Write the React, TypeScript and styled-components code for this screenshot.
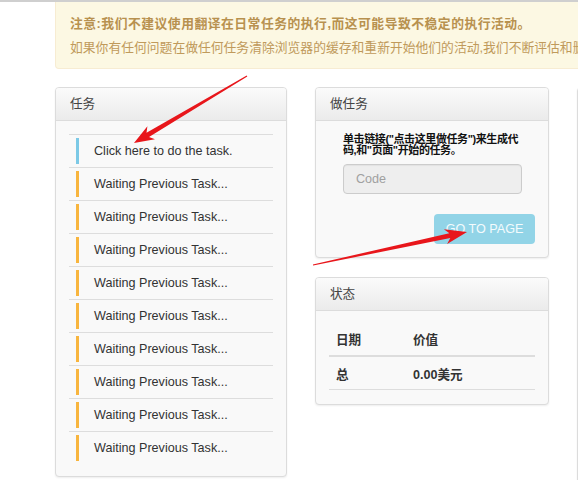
import React from "react";
import styled, { createGlobalStyle } from "styled-components";

const GlobalStyle = createGlobalStyle`
  html, body {
    margin: 0;
    padding: 0;
    background: #ffffff;
    overflow: hidden;
    font-family: "Liberation Sans", "Noto Sans CJK SC", sans-serif;
    color: #333;
  }
`;

const Viewport = styled.div`
  position: relative;
  width: 578px;
  height: 480px;
  overflow: hidden;
`;

const TopLine = styled.div`
  height: 2px;
  background: #cfcfcf;
  width: 100%;
`;

const Page = styled.div`
  width: 1000px;
  padding-left: 55px;
  box-sizing: border-box;
`;

const Alert = styled.div`
  background: #fcf8e3;
  border: 1px solid #f7ecd2;
  border-top: none;
  border-radius: 0 0 4px 4px;
  padding: 10px 14px 8px;
  color: #c09a5b;
  font-size: 12.8px;
  line-height: 24px;
  white-space: nowrap;
`;

const AlertTitle = styled.div`
  font-weight: bold;
  color: #b8914f;
  letter-spacing: 0.5px;
`;

const Columns = styled.div`
  display: grid;
  grid-template-columns: 232px 234px 232px;
  column-gap: 28px;
  align-items: start;
  margin-top: 18px;
`;

const Stack = styled.div`
  display: flex;
  flex-direction: column;
  gap: 19px;
`;

const Panel = styled.div<{ $minHeight?: number }>`
  background: #f9f9f9;
  border: 1px solid #dcdcdc;
  border-radius: 4px;
  box-shadow: 0 1px 2px rgba(0, 0, 0, 0.07);
  box-sizing: border-box;
  min-height: ${(p) => (p.$minHeight ? `${p.$minHeight}px` : "auto")};
  overflow: hidden;
`;

const PanelHeader = styled.div`
  height: 32px;
  line-height: 32px;
  padding-left: 14px;
  background: linear-gradient(#fbfbfb, #ebebeb);
  border-bottom: 1px solid #dcdcdc;
  font-size: 12.6px;
  color: #444;
`;

const PanelBody = styled.div<{ $pad: string }>`
  padding: ${(p) => p.$pad};
`;

const TaskList = styled.div`
  display: flex;
  flex-direction: column;
`;

const TaskRow = styled.div`
  display: flex;
  align-items: center;
  height: 32px;
  border-top: 1px solid #dddddd;
  padding-left: 7px;
  font-size: 12.6px;
  color: #333;
`;

const Bar = styled.span<{ $color: string }>`
  width: 3px;
  height: 26px;
  background: ${(p) => p.$color};
  margin-right: 15px;
  flex: none;
`;

const Instruction = styled.div`
  padding-left: 14px;
  font-size: 11px;
  line-height: 11px;
  font-weight: bold;
  letter-spacing: -0.4px;
  color: #111;
  white-space: nowrap;
`;

const CodeInput = styled.input`
  display: block;
  margin: 8px 0 0 14px;
  width: 179px;
  height: 30px;
  box-sizing: border-box;
  background: #eeeeee;
  border: 1px solid #cccccc;
  border-radius: 4px;
  padding: 0 12px;
  font-family: "Liberation Sans", sans-serif;
  font-size: 12.6px;
  color: #555;
  box-shadow: inset 0 1px 1px rgba(0, 0, 0, 0.05);
  &::placeholder {
    color: #a0a0a0;
  }
`;

const ButtonRow = styled.div`
  display: flex;
  justify-content: flex-end;
  margin-top: 20px;
`;

const GoButton = styled.button`
  width: 101px;
  height: 30px;
  border: none;
  border-radius: 4px;
  background: #92d4e7;
  color: #f4fbfd;
  font-family: "Liberation Sans", sans-serif;
  font-size: 12.6px;
  padding: 0;
`;

const Table = styled.table`
  width: 100%;
  table-layout: fixed;
  border-collapse: collapse;
  font-size: 12.6px;
  font-weight: bold;
  color: #333;
`;

const HeadCell = styled.th<{ $w?: number }>`
  text-align: left;
  height: 34px;
  padding: 0 7px;
  box-sizing: border-box;
  border-bottom: 2px solid #dddddd;
  width: ${(p) => (p.$w ? `${p.$w}px` : "auto")};
`;

const Cell = styled.td`
  height: 32px;
  padding: 0 7px;
  border-bottom: 1px solid #dddddd;
`;

const ArrowLayer = styled.svg`
  position: absolute;
  left: 0;
  top: 0;
  pointer-events: none;
`;

function arrowPoints(
  x1: number,
  y1: number,
  x2: number,
  y2: number,
  headLen: number,
  headW: number,
  sw: number,
  ew: number
) {
  const dx = x2 - x1;
  const dy = y2 - y1;
  const len = Math.hypot(dx, dy);
  const ux = dx / len;
  const uy = dy / len;
  const nx = -uy;
  const ny = ux;
  const bx = x2 - ux * headLen;
  const by = y2 - uy * headLen;
  const bx2 = x2 - ux * headLen * 0.8;
  const by2 = y2 - uy * headLen * 0.8;
  const pts = [
    [x1 + (nx * sw) / 2, y1 + (ny * sw) / 2],
    [bx2 + (nx * ew) / 2, by2 + (ny * ew) / 2],
    [bx + (nx * headW) / 2, by + (ny * headW) / 2],
    [x2, y2],
    [bx - (nx * headW) / 2, by - (ny * headW) / 2],
    [bx2 - (nx * ew) / 2, by2 - (ny * ew) / 2],
    [x1 - (nx * sw) / 2, y1 - (ny * sw) / 2],
  ];
  return pts.map((p) => `${p[0].toFixed(1)},${p[1].toFixed(1)}`).join(" ");
}

const tasks = [
  { text: "Click here to do the task.", color: "#7cc9e6" },
  ...Array.from({ length: 9 }, () => ({
    text: "Waiting Previous Task...",
    color: "#f8b53e",
  })),
];

export default function App() {
  return (
    <Viewport>
      <GlobalStyle />
      <TopLine />
      <Page>
        <Alert>
          <AlertTitle>注意:我们不建议使用翻译在日常任务的执行,而这可能导致不稳定的执行活动。</AlertTitle>
          <div>
            如果你有任何问题在做任何任务清除浏览器的缓存和重新开始他们的活动,我们不断评估和删除不活跃的任务。
          </div>
        </Alert>
        <Columns>
          <Panel>
            <PanelHeader>任务</PanelHeader>
            <PanelBody $pad="13px 13px 12px">
              <TaskList>
                {tasks.map((t, i) => (
                  <TaskRow key={i}>
                    <Bar $color={t.color} />
                    {t.text}
                  </TaskRow>
                ))}
              </TaskList>
            </PanelBody>
          </Panel>
          <Stack>
            <Panel>
              <PanelHeader>做任务</PanelHeader>
              <PanelBody $pad="13px 13px 13px">
                <Instruction>
                  单击链接("点击这里做任务")来生成代
                  <br />
                  码,和"页面"开始的任务。
                </Instruction>
                <CodeInput placeholder="Code" />
                <ButtonRow>
                  <GoButton>GO TO PAGE</GoButton>
                </ButtonRow>
              </PanelBody>
            </Panel>
            <Panel>
              <PanelHeader>状态</PanelHeader>
              <PanelBody $pad="11px 13px 14px">
                <Table>
                  <thead>
                    <tr>
                      <HeadCell $w={77}>日期</HeadCell>
                      <HeadCell>价值</HeadCell>
                    </tr>
                  </thead>
                  <tbody>
                    <tr>
                      <Cell>总</Cell>
                      <Cell>0.00美元</Cell>
                    </tr>
                  </tbody>
                </Table>
              </PanelBody>
            </Panel>
          </Stack>
          <Panel $minHeight={420}>
            <PanelHeader>&nbsp;</PanelHeader>
          </Panel>
        </Columns>
      </Page>
      <ArrowLayer width="578" height="480" viewBox="0 0 578 480">
        <polygon points={arrowPoints(247, 76, 134, 143, 20, 15, 1, 5)} fill="#e8161b" />
        <polygon points={arrowPoints(313, 265, 467, 232, 22, 15, 1, 5)} fill="#e8161b" />
      </ArrowLayer>
    </Viewport>
  );
}
